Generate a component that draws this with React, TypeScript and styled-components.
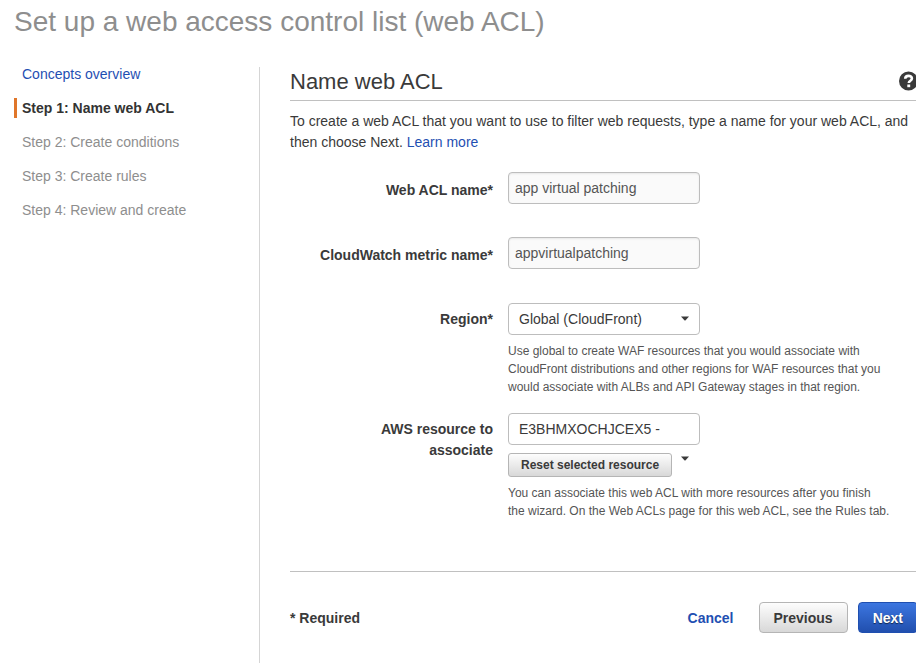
import React from "react";
import styled, { createGlobalStyle, css } from "styled-components";

const GlobalStyle = createGlobalStyle`
  *, *::before, *::after { box-sizing: border-box; }
  body {
    margin: 0;
    background: #fff;
    color: #3a3a3a;
    font-family: "Liberation Sans", Helvetica, Arial, sans-serif;
    font-size: 14px;
    line-height: 21px;
    overflow-x: hidden;
  }
  button, input, select { font: inherit; color: inherit; }
`;

const Page = styled.div`
  padding: 4px 0 3px 14px;
  overflow: hidden;
`;

const PageTitle = styled.h1`
  margin: 0 0 24px;
  font-size: 28px;
  line-height: 36px;
  font-weight: 400;
  color: #8e8e8e;
`;

const Columns = styled.div`
  display: grid;
  grid-template-columns: 245px minmax(0, 1fr);
`;

const StepList = styled.ol`
  display: flex;
  flex-direction: column;
  gap: 14px;
  margin: 0;
  padding: 0;
  list-style: none;
`;

const Step = styled.li<{ $current?: boolean }>`
  padding-left: 5px;
  border-left: 3px solid ${(p) => (p.$current ? "#e0762a" : "transparent")};
  color: ${(p) => (p.$current ? "#333" : "#8e8e8e")};
  font-weight: ${(p) => (p.$current ? 700 : 400)};
  line-height: 20px;
`;

const Link = styled.a<{ $strong?: boolean }>`
  color: #1f4fb2;
  text-decoration: none;
  font-weight: ${(p) => (p.$strong ? 700 : 400)};
`;

const Main = styled.main`
  margin: 3px -2px 0 0;
  padding-left: 30px;
  border-left: 1px solid #d5d5d5;
`;

const SectionHeader = styled.header`
  display: flex;
  align-items: center;
  justify-content: space-between;
  padding: 2px 0 5px;
  border-bottom: 1px solid #c0c0c0;
`;

const SectionTitle = styled.h2`
  margin: 0;
  font-size: 22px;
  line-height: 26px;
  font-weight: 400;
`;

const IconButton = styled.button`
  display: flex;
  padding: 0 0 2px;
  border: 0;
  background: none;
`;

const Intro = styled.p`
  margin: 10px 0 19px;
`;

const FieldRow = styled.div<{ $gap: number }>`
  display: grid;
  grid-template-columns: 203px minmax(0, 1fr);
  column-gap: 15px;
  margin-bottom: ${(p) => p.$gap}px;
`;

const Label = styled.label<{ $top?: number }>`
  padding-top: ${(p) => p.$top ?? 6}px;
  text-align: right;
  font-weight: 700;
`;

const box = css`
  width: 192px;
  height: 32px;
  border: 1px solid #bdbdbd;
  border-radius: 4px;
`;

const TextInput = styled.input`
  ${box}
  display: block;
  padding: 0 6px;
  background: #fafafa;
  color: #555;
  box-shadow: inset 0 1px 2px rgba(0, 0, 0, 0.08);
`;

const SelectWrap = styled.div`
  position: relative;
  width: 192px;
`;

const Select = styled.select`
  ${box}
  display: block;
  padding: 0 10px;
  background: #fff;
  appearance: none;
`;

const SelectArrow = styled.span`
  position: absolute;
  top: 13px;
  right: 10px;
  display: flex;
  pointer-events: none;
`;

const Help = styled.p`
  max-width: 388px;
  margin: 7px 0 0;
  font-size: 12px;
  line-height: 18px;
  color: #555;
`;

const ResetRow = styled.div`
  display: flex;
  gap: 8px;
  margin-top: 8px;
`;

const ResetArrow = styled.span`
  display: flex;
  padding-top: 3px;
`;

const Button = styled.button<{ $primary?: boolean; $small?: boolean }>`
  height: ${(p) => (p.$small ? 24 : 31)}px;
  padding: 0 ${(p) => (p.$small ? 12 : 14)}px;
  border: 1px solid ${(p) => (p.$primary ? "#1f4fb0" : "#b5b5b5")};
  border-radius: ${(p) => (p.$small ? 3 : 4)}px;
  background: ${(p) =>
    p.$primary
      ? "linear-gradient(#3c76e0, #214fae)"
      : "linear-gradient(#fdfdfd, #d8d8d8)"};
  color: ${(p) => (p.$primary ? "#fff" : "#3a3a3a")};
  font-size: ${(p) => (p.$small ? 12 : 14)}px;
  font-weight: 700;
  line-height: 20px;
  text-shadow: ${(p) => (p.$primary ? "0 1px 1px rgba(0, 0, 0, 0.6)" : "none")};
`;

const Footer = styled.footer`
  display: flex;
  align-items: center;
  justify-content: space-between;
  margin-top: 51px;
  padding: 30px 0;
  border-top: 1px solid #c0c0c0;
  line-height: 22px;
`;

const Actions = styled.div`
  display: flex;
  align-items: center;
  gap: 10px;
`;

const CancelSlot = styled.span`
  margin-right: 15px;
`;

const Caret = () => (
  <svg width="10" height="5" viewBox="0 0 10 5" aria-hidden="true">
    <path d="M1 .5h8L5.6 4.2q-.6.6-1.2 0z" fill="#3a3a3a" />
  </svg>
);

const HelpIcon = () => (
  <svg width="19" height="20" viewBox="0 0 19 19" aria-hidden="true">
    <circle cx="9.5" cy="9.5" r="9.5" fill="#3a3a3a" />
    <path
      d="M6.2 7.3C6.3 5.2 7.6 4.4 9.5 4.4c2 0 3.4 1 3.4 2.7 0 2.2-3.1 2.1-3.1 4.4"
      fill="none"
      stroke="#fff"
      strokeWidth="2.6"
    />
    <rect x="8.3" y="13" width="2.9" height="2.7" fill="#fff" />
  </svg>
);

export default function App() {
  return (
    <>
      <GlobalStyle />
      <Page>
        <PageTitle>Set up a web access control list (web ACL)</PageTitle>
        <Columns>
          <nav aria-label="Steps">
            <StepList>
              <Step>
                <Link href="#concepts">Concepts overview</Link>
              </Step>
              <Step $current aria-current="step">
                Step 1: Name web ACL
              </Step>
              <Step>Step 2: Create conditions</Step>
              <Step>Step 3: Create rules</Step>
              <Step>Step 4: Review and create</Step>
            </StepList>
          </nav>
          <Main>
            <SectionHeader>
              <SectionTitle>Name web ACL</SectionTitle>
              <IconButton type="button" aria-label="Help">
                <HelpIcon />
              </IconButton>
            </SectionHeader>
            <Intro>
              To create a web ACL that you want to use to filter web requests,
              type a name for your web ACL, and then choose Next.{" "}
              <Link href="#learn-more">Learn more</Link>
            </Intro>
            <FieldRow $gap={33}>
              <Label htmlFor="acl-name" $top={8}>
                Web ACL name*
              </Label>
              <TextInput id="acl-name" defaultValue="app virtual patching" />
            </FieldRow>
            <FieldRow $gap={34}>
              <Label htmlFor="metric-name" $top={8}>
                CloudWatch metric name*
              </Label>
              <TextInput id="metric-name" defaultValue="appvirtualpatching" />
            </FieldRow>
            <FieldRow $gap={17}>
              <Label htmlFor="region">Region*</Label>
              <div>
                <SelectWrap>
                  <Select id="region">
                    <option>Global (CloudFront)</option>
                  </Select>
                  <SelectArrow>
                    <Caret />
                  </SelectArrow>
                </SelectWrap>
                <Help>
                  Use global to create WAF resources that you would associate
                  with CloudFront distributions and other regions for WAF
                  resources that you would associate with ALBs and API Gateway
                  stages in that region.
                </Help>
              </div>
            </FieldRow>
            <FieldRow $gap={0}>
              <Label htmlFor="resource">
                AWS resource to
                <br />
                associate
              </Label>
              <div>
                <Select id="resource">
                  <option>E3BHMXOCHJCEX5 -</option>
                </Select>
                <ResetRow>
                  <Button type="button" $small>
                    Reset selected resource
                  </Button>
                  <ResetArrow>
                    <Caret />
                  </ResetArrow>
                </ResetRow>
                <Help>
                  You can associate this web ACL with more resources after you
                  finish
                  <br />
                  the wizard. On the Web ACLs page for this web ACL, see the
                  Rules tab.
                </Help>
              </div>
            </FieldRow>
            <Footer>
              <strong>* Required</strong>
              <Actions>
                <CancelSlot>
                  <Link href="#cancel" $strong>
                    Cancel
                  </Link>
                </CancelSlot>
                <Button type="button">Previous</Button>
                <Button type="button" $primary>
                  Next
                </Button>
              </Actions>
            </Footer>
          </Main>
        </Columns>
      </Page>
    </>
  );
}
